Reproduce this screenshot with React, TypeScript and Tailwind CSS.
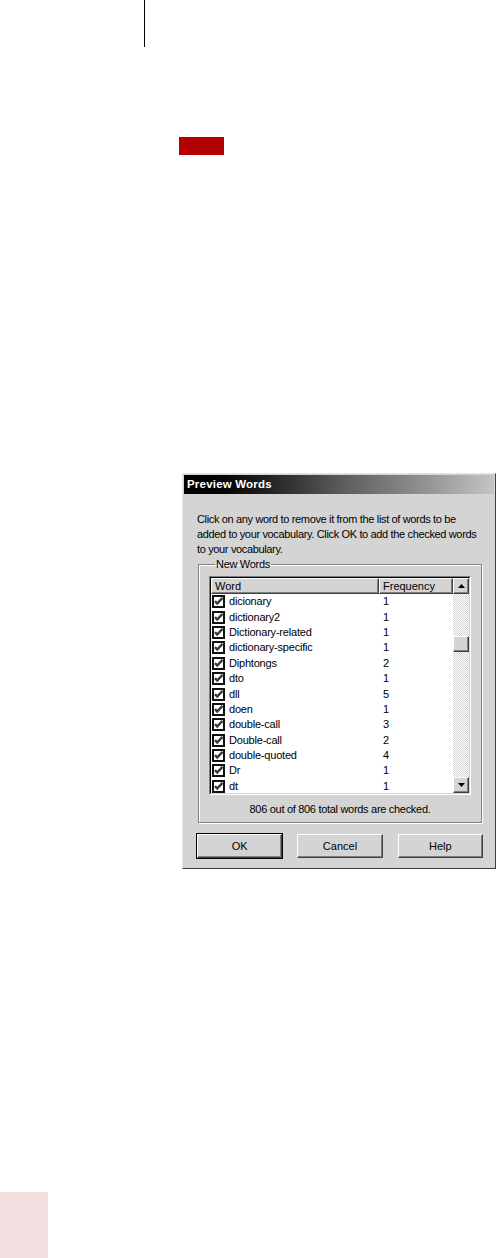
import React from "react";

// Rows shown in the words list
const words: [string, number][] = [
  ["dicionary", 1],
  ["dictionary2", 1],
  ["Dictionary-related", 1],
  ["dictionary-specific", 1],
  ["Diphtongs", 2],
  ["dto", 1],
  ["dll", 5],
  ["doen", 1],
  ["double-call", 3],
  ["Double-call", 2],
  ["double-quoted", 4],
  ["Dr", 1],
  ["dt", 1],
];

const CheckBox = () => (
  <svg width="13" height="13" viewBox="0 0 13 13" className="shrink-0">
    <rect x="0" y="0" width="13" height="13" fill="#fff" />
    <path d="M0 0H13V13H0Z M2 2V11H11V2Z" fill="#111" fillRule="evenodd" />
    <path d="M3 6.2l2.2 2.3 5.3-5.6" stroke="#3a3a3a" strokeWidth="2.4" fill="none" />
  </svg>
);

const Arrow = ({ up }: { up?: boolean }) => (
  <svg width="7" height="4" viewBox="0 0 7 4">
    <path d={up ? "M3.5 0L7 4H0Z" : "M0 0H7L3.5 4Z"} fill="#000" />
  </svg>
);

const raised =
  "border border-t-white border-l-white border-r-[#404040] border-b-[#404040] shadow-[inset_-1px_-1px_0_#808080]";

const Button = ({ label, isDefault }: { label: string; isDefault?: boolean }) => (
  <div
    className={`h-[24px] flex items-center justify-center bg-[#d4d4d4] text-black ${
      isDefault ? "outline outline-1 outline-black" : ""
    } ${raised}`}
  >
    {label}
  </div>
);

const PreviewWords = () => {
  return (
    <div className="w-[314px] h-[396px] bg-[#d4d4d4] border border-t-[#e4e4e4] border-l-[#e4e4e4] border-r-[#404040] border-b-[#404040] p-px flex flex-col text-[11px] leading-[15px] text-black">
      {/* Title bar */}
      <div className="h-[19px] bg-gradient-to-r from-black via-[#5a5a5a] to-[#c4c4c4] flex items-center pl-[3px]">
        <span className="text-white font-bold text-[11.5px] tracking-[0.2px]">Preview Words</span>
      </div>

      <div className="px-[13px] pt-[18px] flex flex-col">
        <p className="tracking-[-0.35px]">
          Click on any word to remove it from the list of words to be added to your vocabulary. Click OK to add the checked words to your vocabulary.
        </p>

        {/* Group box */}
        <fieldset className="mr-[-1px] ml-px border border-[#808080] shadow-[inset_1px_1px_0_#fff,1px_1px_0_#fff] px-[10px] pb-[6px] h-[266px]">
          <legend className="ml-[6px] px-px tracking-[-0.3px]">New Words</legend>

          <div className="mt-[4px] h-[219px] border border-t-[#808080] border-l-[#808080] border-r-white border-b-white">
            <div className="h-full border border-t-black border-l-black border-r-[#d4d4d4] border-b-[#d4d4d4] bg-white flex overflow-hidden">
              <div className="flex-1 flex flex-col">
                <div className="h-[16px] flex shrink-0">
                  <div className={`w-[168px] bg-[#d4d4d4] flex items-center pl-[3px] ${raised}`}>Word</div>
                  <div className={`flex-1 bg-[#d4d4d4] flex items-center pl-[3px] ${raised}`}>Frequency</div>
                </div>
                <div className="flex flex-col">
                  {words.map(([w, f]) => (
                    <div key={w} className="h-[15.4px] shrink-0 flex items-center">
                      <div className="w-[168px] flex items-center pl-[1px] gap-[4px] tracking-[-0.2px]">
                        <CheckBox />
                        <span>{w}</span>
                      </div>
                      <div className="pl-[4px]">{f}</div>
                    </div>
                  ))}
                </div>
              </div>

              {/* Scroll bar */}
              <div className="w-[16px] flex flex-col bg-[repeating-conic-gradient(#d4d4d4_0_25%,#ffffff_0_50%)] bg-[length:2px_2px]">
                <div className={`h-[16px] bg-[#d4d4d4] flex items-center justify-center ${raised}`}>
                  <Arrow up />
                </div>
                <div className="h-[42px]" />
                <div className={`h-[16px] bg-[#d4d4d4] ${raised}`} />
                <div className="flex-1" />
                <div className={`h-[16px] bg-[#d4d4d4] flex items-center justify-center ${raised}`}>
                  <Arrow />
                </div>
              </div>
            </div>
          </div>

          <p className="mt-[7px] text-center tracking-[-0.3px]">806 out of 806 total words are checked.</p>
        </fieldset>

        {/* Buttons */}
        <div className="mt-[11px] grid grid-cols-3 gap-[15px] mr-[-2px]">
          <Button label="OK" isDefault />
          <Button label="Cancel" />
          <Button label="Help" />
        </div>
      </div>
    </div>
  );
};

export default function App() {
  return (
    <div className="w-[497px] h-[1258px] bg-white flex flex-col font-['Liberation_Sans',Arial,sans-serif]">
      <div className="ml-[144px] w-px h-[47px] bg-black shrink-0" />
      <div className="ml-[179px] mt-[90px] w-[45px] h-[18px] bg-[#b30000] shrink-0" />
      <div className="ml-[182px] mt-[318px] shrink-0">
        <PreviewWords />
      </div>
      <div className="mt-auto w-[48px] h-[66px] bg-[#f3e1e1] shrink-0" />
    </div>
  );
}
